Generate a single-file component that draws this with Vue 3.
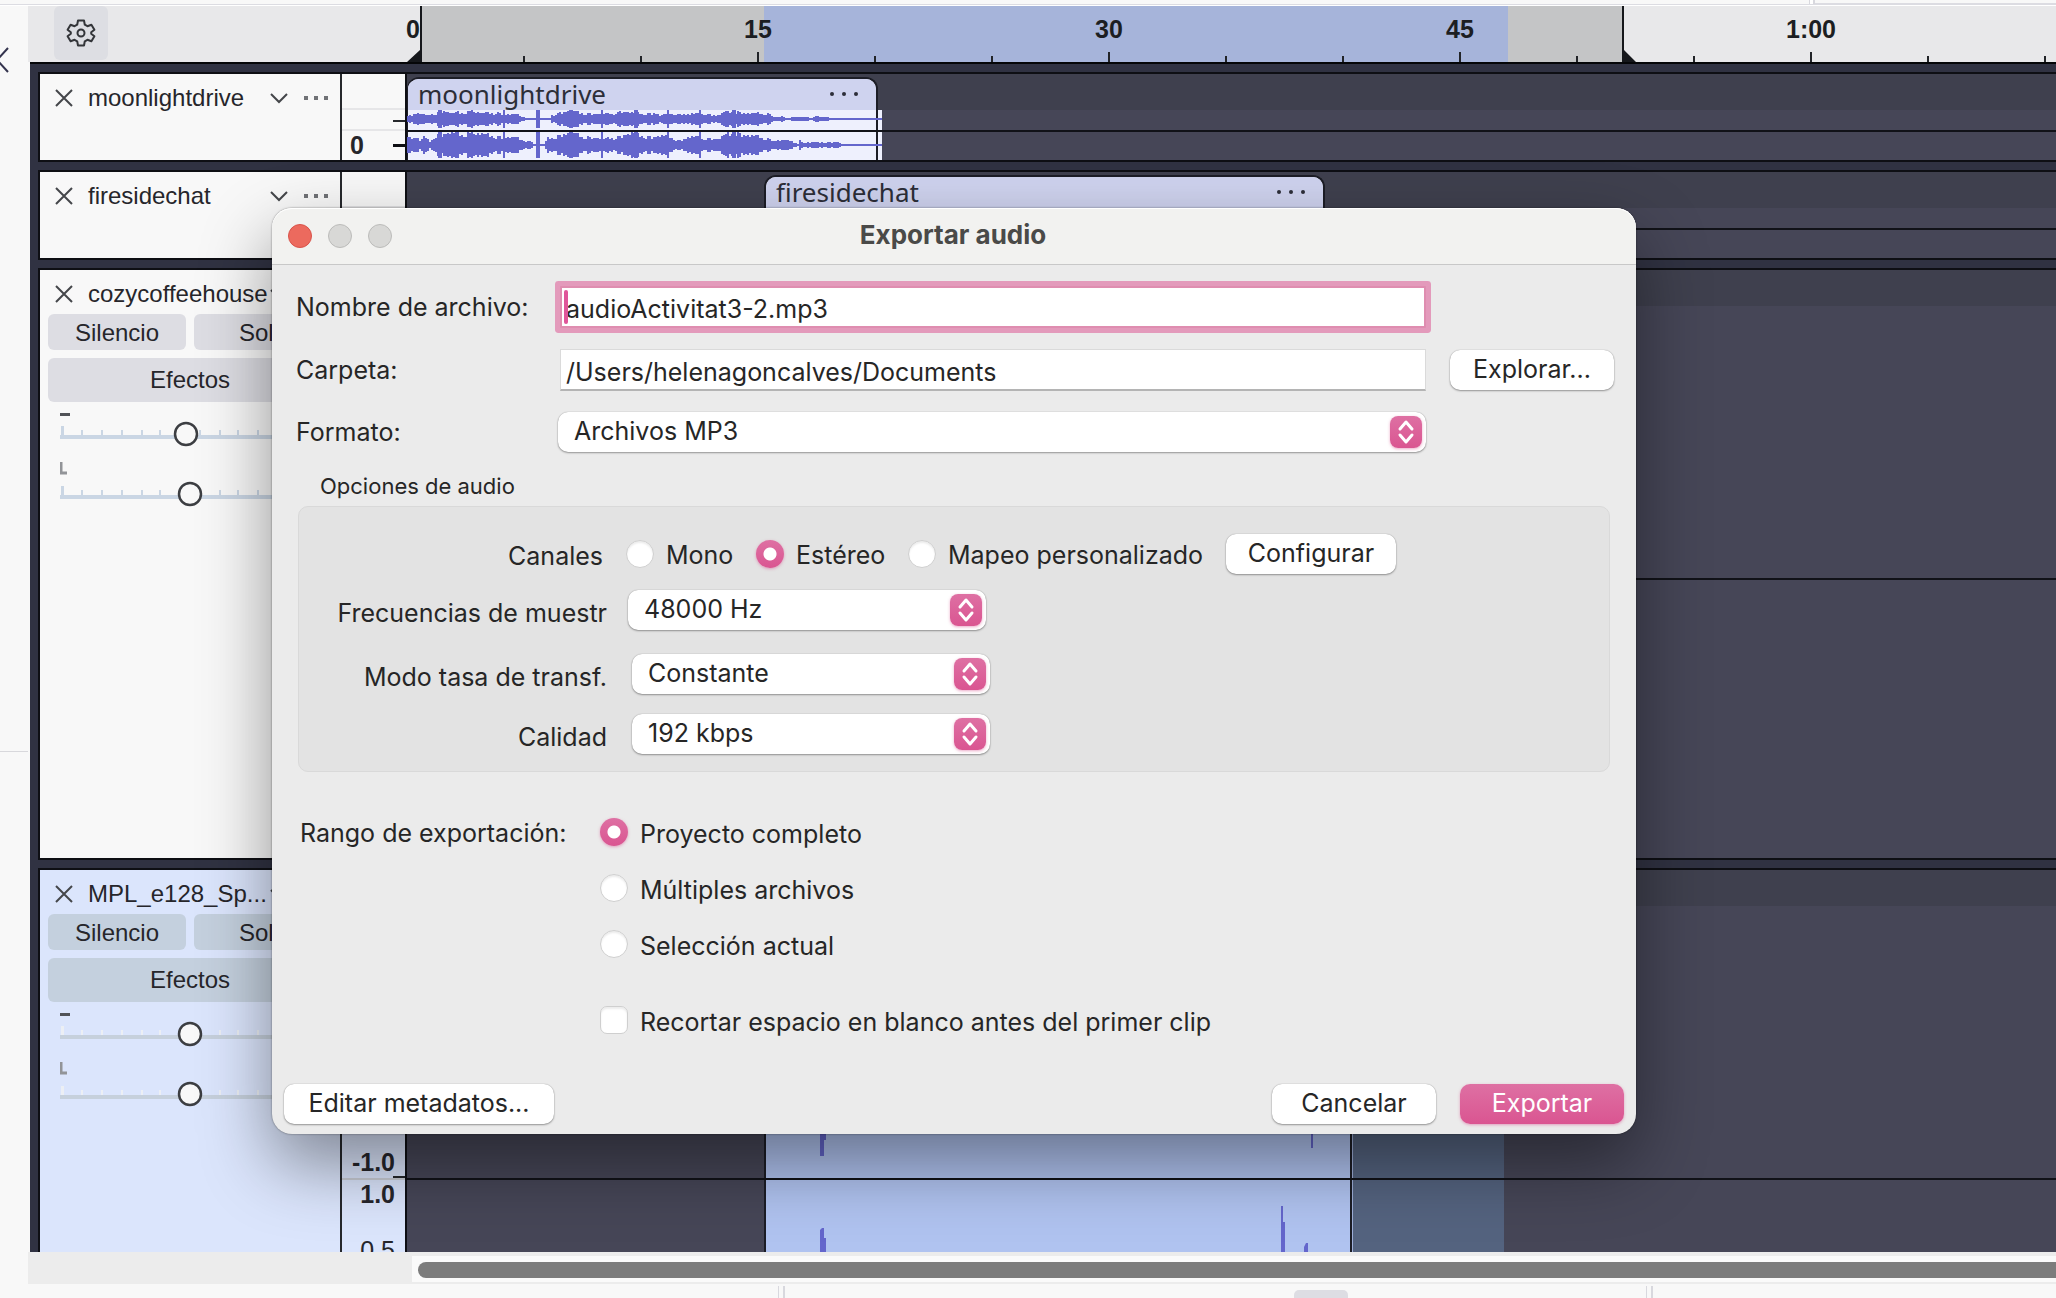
<script setup>
import { ref } from 'vue'

const fileName = ref('audioActivitat3-2.mp3')
const folder = ref('/Users/helenagoncalves/Documents')
const format = ref('Archivos MP3')
const channels = ref('stereo')
const sampleRate = ref('48000 Hz')
const bitrateMode = ref('Constante')
const quality = ref('192 kbps')
const range = ref('project')
const trim = ref(false)

const exportRanges = [
  { value: 'project', label: 'Proyecto completo' },
  { value: 'multiple', label: 'Múltiples archivos' },
  { value: 'selection', label: 'Selección actual' },
]

// Timeline: one tick every five seconds, one label every fifteen
const TICK = 117
const ORIGIN = 378
const labels = { 0: '0', 3: '15', 6: '30', 9: '45', 12: '1:00' }
const ticks = Array.from({ length: 15 }, (_, i) => ({
  x: ORIGIN + i * TICK,
  major: i % 3 === 0,
  first: i === 0,
  label: labels[i],
}))

const tracks = [
  { id: 1, name: 'moonlightdrive', size: 'small' },
  { id: 2, name: 'firesidechat', size: 'small' },
  { id: 3, name: 'cozycoffeehouse', size: 'large', gain: 126, pan: 130 },
  { id: 4, name: 'MPL_e128_Sp...', size: 'rest', selected: true, gain: 130, pan: 130 },
]

const sliderTicks = [22, 42, 62, 82, 100, 120, 140, 160, 178, 198, 218, 238, 258]

// Waveform outline from a coarse envelope of [x, amplitude] points
const upper = [[0, 3], [8, 5], [14, 4], [20, 3], [24, 5], [30, 6], [36, 7], [44, 5], [62, 7], [74, 5], [90, 6], [98, 4], [108, 4], [116, 2], [119, 0], [142, 0], [144, 4], [152, 6], [162, 7], [170, 6], [180, 5], [196, 4], [214, 7], [226, 5], [246, 5], [252, 3], [262, 5], [280, 4], [296, 5], [308, 3], [318, 6], [328, 7], [338, 5], [360, 5], [366, 2], [376, 2], [378, 0], [383, 2], [400, 2], [402, 0], [406, 2], [420, 2], [422, 0], [475, 0]]
const lower = [[0, 7], [10, 6], [13, 3], [16, 7], [22, 3], [27, 9], [36, 10], [50, 10], [60, 11], [72, 9], [84, 9], [97, 7], [110, 6], [124, 3], [127, 0], [136, 1], [140, 6], [150, 9], [162, 10], [176, 8], [196, 5], [210, 8], [226, 10], [246, 7], [262, 8], [270, 4], [284, 7], [300, 6], [310, 5], [318, 9], [328, 12], [338, 8], [358, 7], [366, 4], [384, 4], [390, 1], [392, 4], [396, 2], [428, 3], [434, 1], [438, 0], [475, 0]]
const beats = [32, 65, 97, 130, 163, 195, 228, 261, 293, 326]
const wideBeats = [32, 130, 228, 326]

function wave(env, mid, peak) {
  let d = ''
  let seed = 7
  for (let x = 0; x < 440; x += 2) {
    let i = 0
    while (env[i + 1][0] <= x) i++
    const [x0, a0] = env[i]
    const [x1, a1] = env[i + 1]
    seed = (seed * 137 + 29) % 211
    const base = a0 + ((a1 - a0) * (x - x0)) / (x1 - x0)
    const a = Math.min(peak, Math.round(base * (0.75 + (0.6 * seed) / 211)))
    if (a > 0) d += `M${x} ${mid - a}h2v${2 * a}h-2z`
  }
  for (const b of beats) {
    const w = wideBeats.includes(b) ? 4 : 2
    d += `M${b - 1} ${mid - peak}h${w}v${2 * peak}h-${w}z`
  }
  return d + `M0 ${mid - 1}h475v2h-475z`
}
const waves = wave(upper, 9, 9) + wave(lower, 35, 13)
</script>

<template>
  <div class="screen">
    <div class="top-strip"><i></i><b></b></div>

    <div class="workspace">
      <aside class="rail">
        <svg class="collapse" width="12" height="28" viewBox="0 0 12 28"><path d="M8 2 L-3 14 L8 26" /></svg>
        <div class="rail-line"></div>
      </aside>

      <main class="editor">
        <header class="ruler">
          <div class="range grey before"></div>
          <div class="range blue"></div>
          <div class="range grey after"></div>
          <button class="gear" aria-label="Opciones de línea de tiempo">
            <svg width="30" height="30" viewBox="0 0 30 30">
              <path d="M12 2.5h6l.8 4.2 2.6 1.5 4-1.5 3 5-3.2 2.5v1.6l3.2 2.5-3 5-4-1.5-2.6 1.5-.8 4.2h-6l-.8-4.2-2.6-1.5-4 1.5-3-5 3.2-2.5v-1.6L1.600 11.700l3-5 4 1.500 2.600-1.500z" />
              <circle cx="15" cy="15" r="3.500" />
            </svg>
          </button>
          <div v-for="t in ticks" :key="t.x" class="tick" :class="{ major: t.major, first: t.first }" :style="{ left: t.x + 'px' }">
            <span v-if="t.label">{{ t.label }}</span>
          </div>
          <svg class="marker start" width="15" height="56" viewBox="0 0 15 56"><path d="M13 0h2v56H0L13 44z" /></svg>
          <svg class="marker end" width="15" height="56" viewBox="0 0 15 56"><path d="M0 0h2v44L14 56H0z" /></svg>
        </header>

        <div class="tracks">
          <section v-for="t in tracks" :key="t.id" class="track" :class="[t.size, { selected: t.selected }]">
            <div class="panel">
              <div class="panel-head">
                <svg class="close" width="18" height="18" viewBox="0 0 18 18"><path d="M1 1L17 17M17 1L1 17" /></svg>
                <span class="name">{{ t.name }}</span>
                <svg class="chev" width="18" height="12" viewBox="0 0 18 12"><path d="M1 2L9 10L17 2" /></svg>
                <svg class="dots" width="24" height="4" viewBox="0 0 24 4"><path d="M0 0h4v4H0zM10 0h4v4h-4zM20 0h4v4h-4z" /></svg>
              </div>
              <template v-if="t.gain">
                <div class="track-buttons">
                  <button>Silencio</button>
                  <button>Solo</button>
                  <button class="effects">Efectos</button>
                </div>
                <svg class="sliders" width="280" height="104" viewBox="0 0 280 104">
                  <path class="minus" d="M0 9h10v3H0z" />
                  <path class="axis line" d="M0 31h280v4H0z" />
                  <path class="axis" d="M1 22h3v9h-3z" />
                  <path v-for="x in sliderTicks" :key="x" class="axis" :d="`M${x - 1} 26h2v5h-2z`" />
                  <circle :cx="t.gain" cy="30" r="11" />
                  <path class="ell" d="M1 58v11h6" />
                  <path class="axis line" d="M0 91h280v4H0z" />
                  <path class="axis" d="M1 82h3v9h-3z" />
                  <path v-for="x in sliderTicks" :key="'p' + x" class="axis" :d="`M${x - 1} 86h2v5h-2z`" />
                  <circle :cx="t.pan" cy="90" r="11" />
                </svg>
              </template>
            </div>

            <div class="scale">
              <template v-if="t.id === 1">
                <div class="scale-top"></div>
                <div class="scale-mid"><i class="mark"></i></div>
                <div class="scale-zero"><span>0</span><i class="mark thick"></i></div>
              </template>
              <template v-if="t.id === 2"><div class="scale-top"></div></template>
              <template v-if="t.id === 4">
                <div class="scale-tall"><span>-1.0</span><i class="mark"></i></div>
                <div class="scale-low"><span>1.0</span><span class="thin">0.5</span></div>
              </template>
            </div>

            <div class="lane">
              <div class="lane-head"></div>
              <div class="lane-upper"></div>
              <div class="lane-split"></div>

              <div v-if="t.id === 1" class="tail"></div>
              <div v-if="t.id === 1" class="clip one">
                <div class="clip-head">
                  <span>moonlightdrive</span>
                  <svg width="28" height="4" viewBox="0 0 28 4"><circle cx="2" cy="2" r="2" /><circle cx="14" cy="2" r="2" /><circle cx="26" cy="2" r="2" /></svg>
                </div>
              </div>
              <svg v-if="t.id === 1" class="wave" width="475" height="50" viewBox="0 0 475 50"><path :d="waves" /></svg>

              <div v-if="t.id === 2" class="clip two">
                <div class="clip-head">
                  <span>firesidechat</span>
                  <svg width="28" height="4" viewBox="0 0 28 4"><circle cx="2" cy="2" r="2" /><circle cx="14" cy="2" r="2" /><circle cx="26" cy="2" r="2" /></svg>
                </div>
              </div>

              <template v-if="t.id === 4">
                <div class="selection"></div>
                <div class="clip four"></div>
                <svg class="peaks" width="588" height="118" viewBox="0 0 588 118">
                  <path d="M55 0h6v6h-2v16h-4zM546 0h2v14h-2zM55 118V96l2-2h2v10h2v14zM516 118V72h2v16h2v30zM539 118v-5l2-4h2v9z" />
                </svg>
              </template>
            </div>
          </section>
        </div>

        <div class="scroll-row"><div class="scroll-track"><div class="thumb"></div></div></div>
        <footer class="status"><i class="first"></i><b></b><i class="second"></i></footer>
      </main>
    </div>

    <form class="dialog" role="dialog" aria-labelledby="dialog-title" @submit.prevent>
      <header class="titlebar">
        <div class="lights">
          <button type="button" class="red" aria-label="Cerrar"></button>
          <button type="button" aria-label="Minimizar"></button>
          <button type="button" aria-label="Ampliar"></button>
        </div>
        <h1 id="dialog-title">Exportar audio</h1>
      </header>

      <div class="fields">
        <label for="file-name">Nombre de archivo:</label>
        <div class="focus-field"><input id="file-name" v-model="fileName" type="text" /></div>
        <span></span>
        <label for="folder">Carpeta:</label>
        <input id="folder" v-model="folder" type="text" />
        <button type="button" class="btn">Explorar...</button>
        <label for="format">Formato:</label>
        <div class="popup wide">
          <select id="format" v-model="format"><option>Archivos MP3</option></select>
          <svg width="32" height="32" viewBox="0 0 32 32"><path d="M10 13l6-7 6 7M10 19l6 7 6-7" /></svg>
        </div>
      </div>

      <h2 id="audio-options">Opciones de audio</h2>
      <section class="group" aria-labelledby="audio-options">
        <div class="option channels">
          <span class="caption">Canales</span>
          <div class="channel-choices">
            <label class="choice"><input v-model="channels" type="radio" name="channels" value="mono" /><span>Mono</span></label>
            <label class="choice"><input v-model="channels" type="radio" name="channels" value="stereo" /><span>Estéreo</span></label>
            <label class="choice"><input v-model="channels" type="radio" name="channels" value="custom" /><span>Mapeo personalizado</span></label>
            <button type="button" class="btn">Configurar</button>
          </div>
        </div>
        <div class="option rate">
          <label class="caption" for="rate">Frecuencias de muestr</label>
          <div class="popup">
            <select id="rate" v-model="sampleRate"><option>48000 Hz</option></select>
            <svg width="32" height="32" viewBox="0 0 32 32"><path d="M10 13l6-7 6 7M10 19l6 7 6-7" /></svg>
          </div>
        </div>
        <div class="option">
          <label class="caption" for="mode">Modo tasa de transf.</label>
          <div class="popup">
            <select id="mode" v-model="bitrateMode"><option>Constante</option></select>
            <svg width="32" height="32" viewBox="0 0 32 32"><path d="M10 13l6-7 6 7M10 19l6 7 6-7" /></svg>
          </div>
        </div>
        <div class="option">
          <label class="caption" for="quality">Calidad</label>
          <div class="popup">
            <select id="quality" v-model="quality"><option>192 kbps</option></select>
            <svg width="32" height="32" viewBox="0 0 32 32"><path d="M10 13l6-7 6 7M10 19l6 7 6-7" /></svg>
          </div>
        </div>
      </section>

      <section class="export-range">
        <span class="range-caption">Rango de exportación:</span>
        <div class="range-choices">
          <label v-for="r in exportRanges" :key="r.value" class="choice">
            <input v-model="range" type="radio" name="range" :value="r.value" /><span>{{ r.label }}</span>
          </label>
          <label class="choice trim"><input v-model="trim" type="checkbox" /><span>Recortar espacio en blanco antes del primer clip</span></label>
        </div>
      </section>

      <footer class="actions">
        <button type="button" class="btn metadata">Editar metadatos...</button>
        <button type="button" class="btn">Cancelar</button>
        <button type="submit" class="btn primary">Exportar</button>
      </footer>
    </form>
  </div>
</template>

<style>
body { background: #f8f8f8; overflow: hidden; }
</style>

<style scoped>
* { box-sizing: border-box; }
button, input, select { font: inherit; color: inherit; margin: 0; }
button { border: 0; padding: 0; }
svg { display: block; }

.screen {
  position: relative;
  display: flex;
  flex-direction: column;
  height: 100vh;
  overflow: hidden;
  background: #f8f8f8;
  font-family: "Liberation Sans", Arial, sans-serif;
  color: #26262b;
}
.top-strip { display: flex; justify-content: flex-end; flex: none; height: 6px; border-bottom: 1px solid #fff; box-shadow: inset 0 -1px #dcdce2; }
.top-strip i { width: 6px; height: 4px; border: solid #d8d8de; border-width: 0 2px 0 1px; background: #fff; }
.top-strip b { width: 241px; border-bottom: 2px solid #dcdce2; }
.workspace { display: flex; flex: 1; min-height: 0; }
.rail { width: 28px; flex: none; padding-top: 40px; }
.collapse path { fill: none; stroke: #34344e; stroke-width: 2; }
.rail-line { margin-top: 677px; height: 1px; background: #d8d8dc; }
.editor { flex: 1; min-width: 0; display: flex; flex-direction: column; }

/* Time ruler */
.ruler { position: relative; flex: none; height: 56px; background: #e8e8ea; overflow: hidden; }
.range { position: absolute; top: 0; bottom: 0; }
.grey { background: #c4c5c6; }
.before { left: 393px; width: 343px; }
.blue { left: 736px; width: 744px; background: #a6b4da; }
.after { left: 1480px; width: 115px; }
.gear { display: grid; place-items: center; margin-left: 26px; width: 54px; height: 54px; border-radius: 6px; background: #dddee3; }
.gear path, .gear circle { fill: none; stroke: #333539; stroke-width: 2; stroke-linejoin: round; }
.tick { position: absolute; bottom: 0; width: 2px; height: 6px; background: #222428; display: flex; justify-content: center; }
.tick.major { height: 10px; }
.tick.first { background: none; justify-content: flex-start; }
.tick span { position: absolute; bottom: 19px; font-size: 25px; line-height: 28px; font-weight: 700; color: #1c1e22; }
.marker { position: absolute; top: 0; fill: #15171b; }
.start { left: 379px; }
.end { left: 1594px; }

/* Tracks */
.tracks { flex: 1; min-height: 0; overflow: hidden; display: flex; flex-direction: column; gap: 8px; margin-left: 2px; padding: 8px 0 0 8px; border-top: 2px solid #050608; background: #303242; }
.track { display: flex; flex: none; border: solid #0e0f14; border-width: 2px 0 2px 2px; background: #f8f8f8; }
.small { height: 90px; }
.large { height: 592px; }
.rest { flex: 1; min-height: 0; overflow: hidden; border-bottom: 0; }
.selected { background: #dbe5fc; }
.panel { flex: none; width: 302px; border-right: 2px solid #26282c; }
.panel-head { display: flex; align-items: center; height: 44px; padding: 4px 12px 0 15px; }
.panel-head path { fill: none; stroke: #44464a; stroke-width: 2; }
.panel-head .dots path { fill: #707276; stroke: none; }
.name { flex: 1; margin-left: 15px; font-size: 24px; line-height: 28px; }
.dots { margin-left: 16px; }
.track-buttons { display: grid; grid-template-columns: 138px 138px; gap: 8px; padding: 0 8px; }
.track-buttons button { height: 36px; border-radius: 6px; background: #dddde3; font-size: 24px; line-height: 28px; padding-top: 2px; }
.track-buttons .effects { grid-column: span 2; height: 44px; padding: 0; }
.selected .track-buttons button { background: #c4d0de; }
.sliders { margin: 2px 0 0 20px; }
.minus { fill: #505257; }
.axis { fill: #cad6e4; }
.selected .axis { fill: #eceff4; }
.selected .axis.line { fill: #c6d0dc; }
.ell { fill: none; stroke: #929498; stroke-width: 3; }
.sliders circle { fill: #f8f8f8; stroke: #3c3e42; stroke-width: 2.5; }

.scale { flex: none; width: 65px; border-right: 2px solid #0e0f14; font-size: 25px; line-height: 28px; font-weight: 700; }
.scale-top { height: 36px; border-bottom: 2px solid #e6e6e8; }
.scale-mid { height: 21px; padding-top: 10px; border-bottom: 2px solid #e6e6e8; }
.mark { display: block; width: 12px; height: 2px; margin-left: auto; background: #26282c; }
.mark.thick { height: 3px; background: #0e0f14; }
.scale-zero { display: flex; align-items: center; padding-left: 8px; height: 28px; }
.scale-tall { display: flex; flex-direction: column; justify-content: flex-end; height: 310px; border-bottom: 2px solid #c9ccd4; }
.scale-tall span { padding-right: 10px; text-align: right; }
.scale-low { display: flex; flex-direction: column; gap: 28px; padding-right: 10px; text-align: right; }
.scale-low .thin { font-weight: 400; }

.lane { position: relative; flex: 1; min-width: 0; background: #464657; overflow: hidden; }
.lane-head { height: 36px; background: #3f404e; }
.lane-upper { height: 20px; }
.large .lane-upper, .rest .lane-upper { height: 272px; }
.lane-split { position: relative; z-index: 2; height: 2px; background: #111218; }
.clip { position: absolute; top: 3px; bottom: 0; border: 2px solid #1c1d26; border-bottom: 0; border-radius: 12px 12px 0 0; background: #eef0fd; overflow: hidden; }
.clip-head { display: flex; align-items: center; justify-content: space-between; height: 31px; padding: 0 18px 2px 10px; background: #cfd3ef; font-family: "Noto Sans", sans-serif; font-size: 26px; line-height: 28px; color: #2c2e38; }
.clip-head svg { fill: #2c2e38; }
.clip.one { left: 0; width: 471px; border-left-width: 1px; }
.tail { position: absolute; left: 471px; top: 36px; bottom: 0; width: 4px; background: #eef0fd; }
.clip.two { left: 357px; width: 561px; }
.wave { position: absolute; left: 0; top: 36px; fill: #6466cc; }
.selection { position: absolute; left: 944px; top: 0; bottom: 0; width: 153px; background: #54637f; }
.clip.four { left: 357px; width: 588px; background: #b0c3f0; box-shadow: 1px 0 #9fb0da; }
.peaks { position: absolute; left: 358px; bottom: 0; fill: #6466cc; }

.scroll-row { flex: none; height: 32px; padding: 4px 0 2px 384px; background: #ececec; }
.scroll-track { height: 26px; padding: 6px 0 0 6px; background: #fafafa; }
.thumb { height: 16px; border-radius: 8px 0 0 8px; background: #7c7c7c; }
.status { display: flex; flex: none; height: 14px; padding-top: 2px; }
.status i { width: 7px; border: solid #d8d8de; border-width: 0 2px 0 1px; }
.status .first { margin-left: 750px; }
.status b { width: 54px; margin: 4px 298px 0 509px; border-radius: 5px 5px 0 0; background: #dddde3; }

/* Export dialog */
.dialog {
  position: absolute;
  z-index: 5;
  top: 208px;
  left: 272px;
  width: 1364px;
  border-radius: 20px;
  background: #ebebeb;
  box-shadow: 0 0 2px rgba(0, 0, 0, 0.5), 0 30px 70px rgba(0, 0, 0, 0.42);
  font-family: Inter, "Noto Sans", sans-serif;
  font-size: 25px;
  line-height: 30px;
  color: #262626;
  white-space: nowrap;
}
.titlebar { display: grid; grid-template-columns: 1fr auto 1fr; align-items: center; height: 57px; padding: 0 16px; border-bottom: 1px solid #c8c8c8; border-radius: 20px 20px 0 0; background: #f2f2f0; box-shadow: inset 0 1px #fff; }
.lights { display: flex; gap: 16px; }
.lights button { width: 24px; height: 24px; border: 1px solid #bcbcba; border-radius: 12px; background: #d8d8d6; }
.lights .red { border-color: #d9534a; background: #ec6a5e; }
h1 { margin: 0; padding: 0 2px 2px 0; font-size: 26px; line-height: 30px; font-weight: 700; color: #4a4a48; }

.fields { display: grid; grid-template-columns: 264px 866px 164px; row-gap: 21px; align-items: center; padding: 21px 22px 0 24px; }
.fields > .btn { margin-left: 24px; width: 164px; }
.fields input { width: 100%; height: 42px; border: 1px solid #dadada; border-bottom: 2px solid #b4b4b4; padding: 4px 5px 0; background: #fff; outline: 0; }
.focus-field { position: relative; }
.focus-field input { border: 2px solid #df8db0; box-shadow: 0 0 0 5px #e39abb; border-radius: 1px; padding: 4px 4px 0; }
.focus-field::before { content: ""; position: absolute; left: 4px; top: 4px; width: 4px; height: 34px; border-radius: 2px; background: #e0559a; }
.btn { height: 40px; border-radius: 10px; padding-bottom: 2px; background: #fff; box-shadow: 0 0 1px rgba(0, 0, 0, 0.35), 0 1px 2px rgba(0, 0, 0, 0.35); }
.popup { position: relative; width: 358px; height: 40px; }
.popup.wide { width: 868px; margin-left: -2px; }
.popup select { appearance: none; width: 100%; height: 40px; border: 0; border-radius: 10px; padding: 0 40px 2px 16px; background: #fff; box-shadow: 0 0 1px rgba(0, 0, 0, 0.35), 0 1px 2px rgba(0, 0, 0, 0.35); }
.popup svg { position: absolute; right: 4px; top: 4px; border-radius: 8px; background: linear-gradient(#de70a3, #da5591); box-shadow: 0 1px 3px rgba(218, 85, 145, 0.5); pointer-events: none; }
.popup path { fill: none; stroke: #fff; stroke-width: 3; stroke-linecap: round; stroke-linejoin: round; }

h2 { margin: 20px 0 6px 48px; font-size: 22px; line-height: 28px; font-weight: 400; }
.group { margin: 0 26px; height: 266px; padding-top: 27px; border: 1px solid #d9d9d9; border-radius: 10px; background: #e3e3e3; }
.option { display: flex; align-items: center; gap: 25px; height: 40px; margin-bottom: 20px; }
.option.channels { gap: 23px; margin-bottom: 16px; }
.option.rate { gap: 21px; margin-bottom: 24px; }
.caption { width: 308px; padding-top: 6px; text-align: right; }
.channels .caption { width: 304px; padding-top: 4px; }
.channel-choices { display: grid; grid-template-columns: 130px 152px 318px 170px; align-items: center; }
.choice { display: flex; align-items: center; gap: 12px; height: 28px; }
.choice span { padding-top: 4px; }
.channels .choice span { padding-top: 2px; }
.choice input { appearance: none; flex: none; width: 28px; height: 28px; border: 1px solid #cfcfcf; border-radius: 14px; background: #fff; box-shadow: inset 0 2px 2px rgba(0, 0, 0, 0.08); }
.choice input[type="radio"]:checked { border: 0; background: radial-gradient(circle, #fff 6px, transparent 7px), linear-gradient(#de70a3, #da5591); box-shadow: 0 1px 3px rgba(218, 85, 145, 0.5); }
.choice input[type="checkbox"] { border-radius: 7px; }

.export-range { display: flex; padding: 46px 0 0 28px; }
.range-caption { width: 300px; }
.range-choices { display: flex; flex-direction: column; gap: 28px; }
.trim { margin-top: 20px; }
.actions { display: flex; align-items: center; gap: 24px; padding: 50px 12px 10px; }
.actions .btn { width: 164px; }
.actions .metadata { width: 270px; margin-right: auto; }
.actions .primary { color: #fff; background: linear-gradient(#de70a3, #da5591); box-shadow: 0 1px 3px rgba(218, 85, 145, 0.5); }
</style>
